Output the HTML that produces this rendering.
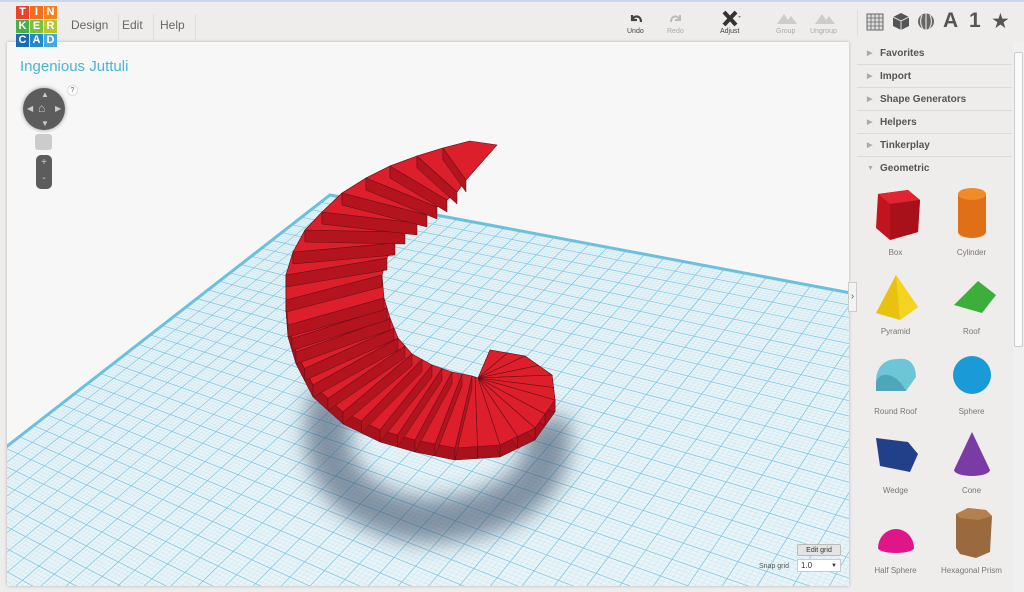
<!DOCTYPE html>
<html style="overflow:hidden"><head><meta charset="utf-8">
<style>
*{margin:0;padding:0;box-sizing:border-box}
html,body{width:1024px;height:592px;overflow:hidden}
body{background:#eeedeb;font-family:"Liberation Sans",sans-serif;position:relative}
.topline{position:absolute;left:0;top:0;width:1024px;height:2px;background:#c8d8ea}
.logo{position:absolute;left:16px;top:6px;width:41px;height:41px;display:grid;grid-template-columns:repeat(3,13px);grid-template-rows:repeat(3,13px);gap:1px;z-index:5}
.logo div{color:#fff;font-weight:bold;font-size:11px;text-align:center;line-height:13px}
.menu{position:absolute;top:14px;font-size:12px;color:#666;height:26px;border-right:1px solid #ddd}
.tb{position:absolute;top:28px;font-size:7px;color:#444;text-align:center}
.tb.dis{color:#aaa}
.vp{position:absolute;left:7px;top:42px;width:842px;height:544px;background:#f7f7f7;box-shadow:0 0 3px rgba(0,0,0,.25);overflow:hidden}
.title{position:absolute;left:20px;top:58px;font-size:15px;color:#4ab6cf}
.panel{position:absolute;left:857px;top:42px;width:155px;height:550px}
.row{height:23px;border-bottom:1px solid #dcdbd9;font-size:10px;font-weight:bold;color:#555;line-height:23px;padding-left:23px;position:relative}
.row:before{content:"▶";position:absolute;left:10px;font-size:7px;color:#aaa}
.row.open:before{content:"▼"}
.shape{position:absolute;width:75px;text-align:center;font-size:8px;color:#777}
.shape svg{display:block;margin:0 auto 4px}
.scroll{position:absolute;left:1013px;top:42px;width:11px;height:550px;background:#f0f0f0}
.thumb{position:absolute;left:1014px;top:52px;width:9px;height:295px;background:#fafafa;border:1px solid #ccc;border-radius:2px}
</style></head><body>
<div class="topline"></div>
<div class="logo">
<div style="background:#e8412c">T</div><div style="background:#f36d21">I</div><div style="background:#f3811f">N</div>
<div style="background:#4aae47">K</div><div style="background:#7cbf3d">E</div><div style="background:#b6c630">R</div>
<div style="background:#1c6ab3">C</div><div style="background:#2389cd">A</div><div style="background:#45a9dd">D</div>
</div>
<div class="menu" style="left:60px;padding:4px 10px 0 11px;border-left:none">Design</div>
<div class="menu" style="left:111px;padding:4px 10px 0 11px">Edit</div>
<div class="menu" style="left:149px;padding:4px 10px 0 11px">Help</div>
<svg style="position:absolute;left:628px;top:12px" width="16" height="14"><path d="M4 3 L4 8 L9 8 M4 8 C6 3 13 3 13 10" stroke="#444" stroke-width="2.2" fill="none"/></svg>
<div class="tb" style="left:627px">Undo</div>
<svg style="position:absolute;left:668px;top:12px" width="16" height="14"><path d="M12 3 L12 8 L7 8 M12 8 C10 3 3 3 3 10" stroke="#bbb" stroke-width="2" fill="none"/></svg>
<div class="tb dis" style="left:667px">Redo</div>
<svg style="position:absolute;left:722px;top:10px" width="22" height="18"><path d="M2 2 L14 15 M14 2 L2 15" stroke="#333" stroke-width="4"/><path d="M16 6 l3 0 l-1.5 2z" fill="#888"/></svg>
<div class="tb" style="left:720px">Adjust</div>
<svg style="position:absolute;left:776px;top:12px" width="22" height="13"><path d="M1 12 L8 2 L12 8 L15 4 L21 12Z" fill="#ccc"/></svg>
<div class="tb dis" style="left:776px">Group</div>
<svg style="position:absolute;left:814px;top:12px" width="22" height="13"><path d="M1 12 L8 2 L12 8 L15 4 L21 12Z" fill="#ccc"/></svg>
<div class="tb dis" style="left:810px">Ungroup</div>
<div style="position:absolute;left:857px;top:10px;width:1px;height:26px;background:#ddd"></div>
<svg style="position:absolute;left:866px;top:13px" width="18" height="18"><rect x="1" y="1" width="16" height="16" fill="#ddd" stroke="#666"/><path d="M9 1V17M1 9H17M5 1V17M13 1V17M1 5H17M1 13H17" stroke="#666" stroke-width=".8"/></svg>
<svg style="position:absolute;left:892px;top:12px" width="18" height="19"><path d="M9 1 L17 5 L17 14 L9 18 L1 14 L1 5Z" fill="#555"/><path d="M1 5 L9 9 L17 5 M9 9 V18" stroke="#ddd" stroke-width="1" fill="none"/></svg>
<svg style="position:absolute;left:917px;top:12px" width="18" height="19"><circle cx="9" cy="9.5" r="8" fill="#666"/><path d="M5 3 C3 8 3 12 6 17 M9 1.5 V17.5 M13 3 C15 8 15 12 12 17" stroke="#ddd" stroke-width="1.2" fill="none"/></svg>
<div style="position:absolute;left:943px;top:9px;font-size:21px;font-weight:bold;color:#555">A</div>
<div style="position:absolute;left:969px;top:9px;font-size:21px;font-weight:bold;color:#555">1</div>
<div style="position:absolute;left:991px;top:9px;font-size:21px;color:#555">★</div>

<div class="vp">
<svg id="scene" width="842" height="544" viewBox="7 42 842 544" style="position:absolute;left:0;top:0">
<defs><filter id="bl" x="-50%" y="-50%" width="200%" height="200%"><feGaussianBlur stdDeviation="10"/></filter></defs>
<polygon points="330,195 1010,323 640,1000 -120,545" fill="#e9f4f8"/>
<g id="grid"></g>
<path d="M335 395 C305 470 365 525 440 520 C520 515 560 470 545 420" stroke="rgba(50,70,95,.55)" stroke-width="45" fill="none" filter="url(#bl)"/>
<g id="stairs"></g>
</svg>
</div>
<div class="title">Ingenious Juttuli</div>
<div style="position:absolute;left:23px;top:88px;width:42px;height:42px;border-radius:50%;background:#5c5c5c;box-shadow:0 0 4px rgba(0,0,0,.4);color:#ccc;font-size:8px">
<span style="position:absolute;left:18px;top:2px">▲</span><span style="position:absolute;left:18px;top:31px">▼</span><span style="position:absolute;left:4px;top:16px">◀</span><span style="position:absolute;left:32px;top:16px">▶</span><span style="position:absolute;left:15px;top:13px;font-size:12px">⌂</span></div>
<div style="position:absolute;left:67px;top:85px;width:11px;height:11px;border-radius:50%;background:#fff;border:1px solid #ddd;font-size:7px;color:#666;text-align:center;line-height:10px">?</div>
<div style="position:absolute;left:35px;top:134px;width:17px;height:16px;border-radius:3px;background:#ccc"></div>
<div style="position:absolute;left:36px;top:155px;width:16px;height:34px;border-radius:5px;background:#5c5c5c;color:#ccc;font-size:10px;text-align:center;line-height:16px">+<br>-</div>
<div style="position:absolute;left:797px;top:544px;width:44px;height:12px;background:#e4e4e4;border:1px solid #bbb;border-radius:2px;font-size:7px;text-align:center;line-height:11px;color:#333">Edit grid</div>
<div style="position:absolute;left:759px;top:563px;font-size:7px;color:#555">Snap grid</div>
<div style="position:absolute;left:797px;top:559px;width:44px;height:13px;background:#fff;border:1px solid #ccc;font-size:8px;line-height:12px;padding-left:3px;color:#333">1.0<span style="position:absolute;right:3px;font-size:6px">▼</span></div>
<div style="position:absolute;left:848px;top:282px;width:9px;height:30px;background:#f3f3f3;border:1px solid #ccc;font-size:10px;color:#666;line-height:28px;text-align:center">›</div>

<div class="panel">
<div class="row">Favorites</div><div class="row">Import</div><div class="row">Shape Generators</div><div class="row">Helpers</div><div class="row">Tinkerplay</div><div class="row open" style="border:none">Geometric</div>
</div>
<div class="shape" style="left:858px;top:186px"><svg width="52" height="58"><path d="M8 8 L38 4 L50 14 L48 46 L20 54 L6 42Z" fill="#c2141f"/><path d="M8 8 L38 4 L50 14 L20 18Z" fill="#e02530"/><path d="M20 18 L50 14 L48 46 L20 54Z" fill="#a8101a"/></svg>Box</div>
<div class="shape" style="left:934px;top:186px"><svg width="52" height="58"><path d="M12 8 V46 A14 6 0 0 0 40 46 V8Z" fill="#e07018"/><ellipse cx="26" cy="8" rx="14" ry="6" fill="#f08a2a"/></svg>Cylinder</div>
<div class="shape" style="left:858px;top:265px"><svg width="52" height="58"><path d="M26 10 L6 48 L30 55 L48 42Z" fill="#e9c210"/><path d="M26 10 L30 55 L48 42Z" fill="#f4d420"/></svg>Pyramid</div>
<div class="shape" style="left:934px;top:265px"><svg width="52" height="58"><path d="M32 16 L8 40 L36 48 L50 30Z" fill="#3cae3c"/><path d="M32 16 L8 40 L18 30Z" fill="#2a8a2a"/></svg>Roof</div>
<div class="shape" style="left:858px;top:345px"><svg width="52" height="58"><path d="M6 38 C6 22 14 14 28 14 C44 12 46 26 46 32 L36 46 L6 44Z" fill="#6cc6d6"/><path d="M6 38 C8 26 26 26 36 46 L6 46Z" fill="#4ea6b8"/></svg>Round Roof</div>
<div class="shape" style="left:934px;top:345px"><svg width="52" height="58"><circle cx="26" cy="30" r="19" fill="#1a9ad6"/></svg>Sphere</div>
<div class="shape" style="left:858px;top:424px"><svg width="52" height="58"><path d="M6 14 L38 18 L48 30 L40 48 L10 42Z" fill="#223f8a"/></svg>Wedge</div>
<div class="shape" style="left:934px;top:424px"><svg width="52" height="58"><path d="M26 8 L8 46 A18 6 0 0 0 44 46Z" fill="#7a3ba6"/></svg>Cone</div>
<div class="shape" style="left:858px;top:504px"><svg width="52" height="58"><path d="M8 44 A18 19 0 0 1 44 44 A18 5 0 0 1 8 44Z" fill="#e0158a"/></svg>Half Sphere</div>
<div class="shape" style="left:934px;top:504px"><svg width="52" height="58"><path d="M10 10 L22 4 L40 6 L46 12 L44 48 L30 54 L14 50 L10 44Z" fill="#9a6a3e"/><path d="M10 10 L22 4 L40 6 L46 12 L32 16 L14 14Z" fill="#b5804e"/></svg>Hexagonal Prism</div>
<div class="scroll"></div><div class="thumb"></div>

<script>
(function(){
var src=[[0,0],[1,0],[0,1],[1,1]],dst=[[330,195],[1010,323],[-120,545],[640,1000]];
var A=[],b=[];
for(var i=0;i<4;i++){var x=src[i][0],y=src[i][1],X=dst[i][0],Y=dst[i][1];
A.push([x,y,1,0,0,0,-x*X,-y*X]);b.push(X);A.push([0,0,0,x,y,1,-x*Y,-y*Y]);b.push(Y);}
for(var c=0;c<8;c++){var p=c;for(var r=c+1;r<8;r++)if(Math.abs(A[r][c])>Math.abs(A[p][c]))p=r;
var t=A[c];A[c]=A[p];A[p]=t;t=b[c];b[c]=b[p];b[p]=t;
for(var r=0;r<8;r++)if(r!=c){var f=A[r][c]/A[c][c];for(var k=c;k<8;k++)A[r][k]-=f*A[c][k];b[r]-=f*b[c];}}
var h=b.map(function(v,i){return v/A[i][i]});
function P(u,v){var w=h[6]*u+h[7]*v+1;return[(h[0]*u+h[1]*v+h[2])/w,(h[3]*u+h[4]*v+h[5])/w];}
var s="",N=36,M=5;
for(var i=0;i<=N*M;i++){var t=i/(N*M),maj=i%M==0;
var a=P(t,0),e=P(t,1),a2=P(0,t),e2=P(1,t);
var st=maj?'stroke="#80c8e2" stroke-width="0.8"':'stroke="#bfe1ed" stroke-width="0.4"';
s+='<line x1="'+a[0]+'" y1="'+a[1]+'" x2="'+e[0]+'" y2="'+e[1]+'" '+st+'/>';
s+='<line x1="'+a2[0]+'" y1="'+a2[1]+'" x2="'+e2[0]+'" y2="'+e2[1]+'" '+st+'/>';}
s+='<polyline points="'+P(0,1).join(",")+' 330,195 '+P(1,0).join(",")+'" stroke="#6cc0de" stroke-width="3" fill="none"/>';
document.getElementById("grid").innerHTML=s;
var B=[[[470,141],[497,145]],[[443,148],[466,180]],[[417,156],[457,192]],[[390,166],[447,200]],[[366,178],[437,207]],[[342,193],[427,215]],[[322,212],[417,223]],[[305,230],[405,232]],[[293,252],[395,243]],[[286,275],[387,258]],[[286,300],[382,275]],[[288,325],[384,298]],[[296,352],[390,318]],[[313,385],[398,338]],[[343,412],[412,354]],[[380,430],[432,365]],[[415,440],[452,372]],[[455,448],[472,376]],[[500,445],[478,378]],[[535,428],[478,378]],[[555,400],[478,378]],[[552,375],[478,378]],[[525,356],[478,378]],[[490,350],[478,378]]];
function L(a,b,t){return[a[0]+(b[0]-a[0])*t,a[1]+(b[1]-a[1])*t];}
var E=[B[0]];
for(var k=1;k<B.length;k++){var sub=k>=12?2:1;for(var j=1;j<=sub;j++){var t=j/sub;E.push([L(B[k-1][0],B[k][0],t),L(B[k-1][1],B[k][1],t)]);}}
function pt(p){return p[0].toFixed(1)+','+p[1].toFixed(1)+' ';}
var g="",d=12;
for(var k=E.length-2;k>=0;k--){var o0=E[k][0],i0=E[k][1],o1=E[k+1][0],i1=E[k+1][1];
g+='<polygon points="'+pt(o0)+pt(o1)+pt([o1[0],o1[1]+d])+pt([o0[0],o0[1]+d])+'" fill="#a8121c" stroke="#5a1018" stroke-width=".5"/>';
g+='<polygon points="'+pt(o1)+pt(i1)+pt([i1[0],i1[1]+d])+pt([o1[0],o1[1]+d])+'" fill="#b3141e" stroke="#5a1018" stroke-width=".5"/>';
g+='<polygon points="'+pt(o0)+pt(o1)+pt(i1)+pt(i0)+'" fill="#dd1f2c" stroke="#6a1018" stroke-width=".6"/>';}
document.getElementById("stairs").innerHTML=g;
})();
</script>
</body></html>
